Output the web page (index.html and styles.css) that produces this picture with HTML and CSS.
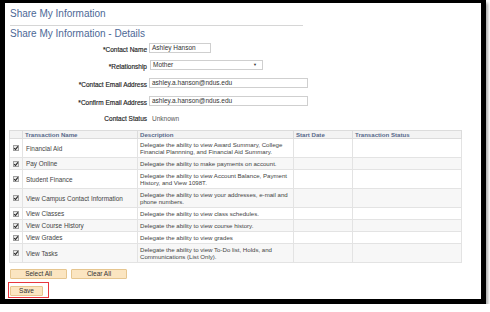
FILE: index.html
```html
<!DOCTYPE html>
<html lang="en">
<head>
    <meta charset="UTF-8">
    <title>Share My Information</title>
    <link rel="stylesheet" href="styles.css">
</head>
<body>
    <div class="frame">
        <div class="page">
            <h1 class="title">Share My Information</h1>
            <h2 class="subtitle">Share My Information - Details</h2>

            <div class="field-row">
                <span class="label">*Contact Name</span>
                <span class="input input-name">Ashley Hanson</span>
            </div>
            <div class="field-row row-rel">
                <span class="label">*Relationship</span>
                <span class="input input-select">Mother<span class="arrow">&#9660;</span></span>
            </div>
            <div class="field-row row-mail">
                <span class="label">*Contact Email Address</span>
                <span class="input input-mail">ashley.a.hanson@ndus.edu</span>
            </div>
            <div class="field-row row-mail">
                <span class="label">*Confirm Email Address</span>
                <span class="input input-mail">ashley.a.hanson@ndus.edu</span>
            </div>
            <div class="field-row row-status">
                <span class="label">Contact Status</span>
                <span class="value">Unknown</span>
            </div>

            <table class="grid">
                <colgroup>
                    <col style="width:13px">
                    <col style="width:115px">
                    <col style="width:156px">
                    <col style="width:59px">
                    <col style="width:109px">
                </colgroup>
                <thead>
                    <tr>
                        <th></th>
                        <th>Transaction Name</th>
                        <th>Description</th>
                        <th>Start Date</th>
                        <th>Transaction Status</th>
                    </tr>
                </thead>
                <tbody id="rows"></tbody>
            </table>

            <div class="buttons">
                <button class="btn btn-wide">Select All</button>
                <button class="btn btn-wide btn-clear">Clear All</button>
            </div>
            <div class="save-box">
                <button class="btn btn-save">Save</button>
            </div>
        </div>
    </div>

    <script>
        const transactions = [
            ['Financial Aid', 'Delegate the ability to view Award Summary, College Financial Plannning, and Financial Aid Summary.'],
            ['Pay Online', 'Delegate the ability to make payments on account.'],
            ['Student Finance', 'Delegate the ability to view Account Balance, Payment History, and View 1098T.'],
            ['View Campus Contact Information', 'Delegate the ability to view your addresses, e-mail and phone numbers.'],
            ['View Classes', 'Delegate the ability to view class schedules.'],
            ['View Course History', 'Delegate the ability to view course history.'],
            ['View Grades', 'Delegate the ability to view grades'],
            ['View Tasks', 'Delegate the ability to view To-Do list, Holds, and Communications (List Only).']
        ];

        const check = '<span class="check"><svg viewBox="0 0 6 6" width="6" height="6"><path d="M1.2 3.1 L2.5 4.5 L4.9 1.3" fill="none" stroke="#222" stroke-width="1.1"/></svg></span>';

        document.getElementById('rows').innerHTML = transactions.map(t => `
            <tr>
                <td class="cell-check">${check}</td>
                <td class="cell-name">${t[0]}</td>
                <td>${t[1]}</td>
                <td></td>
                <td></td>
            </tr>
        `).join('');
    </script>
</body>
</html>
```

FILE: styles.css
```css
body {
    margin: 0;
    background: #fff;
    font-family: "Liberation Sans", Arial, sans-serif;
    color: #333;
}
.frame {
    box-sizing: border-box;
    width: 486px;
    height: 304px;
    border-style: solid;
    border-color: #000;
    border-width: 3px 5px 5px 5px;
    background: #fff;
    box-shadow: 2px 3px 3px rgba(0, 0, 0, 0.35);
    overflow: hidden;
}
.page {
    padding-left: 5px;
}
.title {
    font-size: 10px;
    line-height: 12px;
    font-weight: normal;
    color: #4d6896;
    margin: 5px 0 0;
    padding-bottom: 5px;
    width: 293px;
    border-bottom: 1px solid #d6d6d6;
}
.subtitle {
    font-size: 10px;
    line-height: 12px;
    font-weight: normal;
    color: #4d6896;
    margin: 2px 0 0;
}
.field-row {
    display: flex;
    align-items: flex-end;
    margin-top: 3px;
    font-size: 6.5px;
}
.row-rel {
    margin-top: 7px;
}
.row-mail {
    margin-top: 8px;
}
.row-status {
    margin-top: 9px;
    align-items: center;
}
.label {
    box-sizing: border-box;
    width: 139px;
    padding-right: 2px;
    text-align: right;
    color: #222;
    line-height: 7px;
    -webkit-text-stroke: 0.15px #222;
}
.value {
    padding-left: 3px;
    color: #555;
    line-height: 7px;
}
.input {
    box-sizing: border-box;
    height: 10px;
    border: 1px solid #cfcfcf;
    background: #fff;
    padding: 0 2px;
    line-height: 7px;
    color: #333;
    position: relative;
}
.input-name {
    width: 62px;
}
.input-select {
    width: 113px;
    margin-left: 1px;
}
.input-mail {
    width: 159px;
}
.arrow {
    position: absolute;
    right: 5px;
    top: 2px;
    font-size: 4px;
    line-height: 4px;
    color: #333;
}
.grid {
    margin: 8px 0 0 -1px;
    width: 452px;
    table-layout: fixed;
    border-collapse: collapse;
    font-size: 6.1px;
    line-height: 7px;
    border: 1px solid #dcdcdc;
}
.grid th {
    height: 8px;
    box-sizing: border-box;
    text-align: left;
    font-weight: bold;
    color: #56688a;
    background: #f3f3f3;
    padding: 0 2px;
    border: 1px solid #dcdcdc;
}
.grid td {
    height: 11px;
    box-sizing: border-box;
    padding: 2px;
    border: 1px solid #e3e3e3;
    color: #444;
    vertical-align: middle;
}
.grid td.cell-name {
    font-size: 6.4px;
    padding-left: 3px;
}
.grid tbody tr:nth-child(even) td {
    background: #f7f7f7;
}
.grid td.cell-check {
    padding: 0 0 0 3px;
}
.check {
    display: block;
    width: 6px;
    height: 6px;
    box-sizing: border-box;
    border: 1px solid #a0a0a0;
    background: #e8e8e8;
}
.check svg {
    display: block;
    margin: -1px 0 0 -1px;
}
.buttons {
    display: flex;
    gap: 4px;
    margin-top: 6px;
}
.btn {
    box-sizing: border-box;
    height: 10px;
    padding: 0;
    font-family: "Liberation Sans", Arial, sans-serif;
    font-size: 6.5px;
    line-height: 8px;
    color: #333;
    background: #fbe5c1;
    border: 1px solid #e6c690;
    border-radius: 1px;
}
.btn-wide {
    width: 57px;
}
.btn-clear {
    width: 56px;
}
.save-box {
    display: flex;
    width: fit-content;
    margin: 3px 0 0 -2px;
    padding: 2.5px 5px 1.5px 1px;
    border: 1.5px solid #e8363d;
}
.btn-save {
    display: block;
    width: 33px;
    height: 10px;
}
```
